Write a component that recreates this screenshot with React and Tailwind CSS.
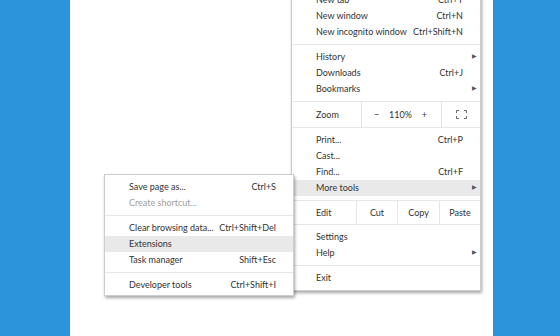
import React from "react";

const font = { fontFamily: "Lato, 'Liberation Sans', sans-serif" };

const Item = ({ label, shortcut, arrow, muted, active }) => (
	<div className={`h-4 flex items-center pl-6 pr-[17px] whitespace-nowrap ${active ? "bg-[#e9e9e9]" : ""}`}>
		<span className={`flex-1 ${muted ? "text-[#a0a0a0]" : "text-[#333]"}`}>{label}</span>
		{shortcut && <span className="text-[#333]">{shortcut}</span>}
		{arrow && <span className="text-[6px] leading-none text-[#555] -mr-[14px] -mt-[2px]">&#9654;</span>}
	</div>
);

const Sep = () => <div className="my-1 border-t border-[#e6e6e6]" />;

const MainMenu = () => (
	<div className="absolute left-[221px] top-[-13px] w-[190px] bg-white border border-[#cdcdcd] shadow-[1px_2px_3px_rgba(0,0,0,0.35)] py-1">
		<Item label="New tab" shortcut="Ctrl+T" />
		<Item label="New window" shortcut="Ctrl+N" />
		<Item label="New incognito window" shortcut="Ctrl+Shift+N" />
		<Sep />
		<Item label="History" arrow />
		<Item label="Downloads" shortcut="Ctrl+J" />
		<Item label="Bookmarks" arrow />
		<div className="mt-1 h-[27px] flex border-y border-[#e6e6e6] text-[#333]">
			<div className="w-[70px] pl-6 flex items-center border-r border-[#e6e6e6]">Zoom</div>
			<div className="w-[80px] flex items-center justify-between pl-3 pr-3.5 border-r border-[#e6e6e6]">
				<span>&minus;</span>
				<span>110%</span>
				<span>+</span>
			</div>
			<div className="flex-1 flex items-center justify-center">
				<svg width="11" height="9" viewBox="0 0 11 9" fill="none" stroke="#666" strokeWidth="1">
					<path d="M0.5 3V0.5H3M8 0.5H10.5V3M10.5 6V8.5H8M3 8.5H0.5V6" />
				</svg>
			</div>
		</div>
		<div className="mt-1">
			<Item label="Print..." shortcut="Ctrl+P" />
			<Item label="Cast..." />
			<Item label="Find..." shortcut="Ctrl+F" />
			<Item label="More tools" arrow active />
		</div>
		<div className="mt-1 h-[25px] flex border-y border-[#e6e6e6] text-[#333]">
			<div className="w-[65px] pl-6 flex items-center border-r border-[#e6e6e6]">Edit</div>
			<div className="w-[41px] flex items-center justify-center border-r border-[#e6e6e6]">Cut</div>
			<div className="w-[42px] flex items-center justify-center border-r border-[#e6e6e6]">Copy</div>
			<div className="flex-1 flex items-center justify-center">Paste</div>
		</div>
		<div className="mt-1">
			<Item label="Settings" />
			<Item label="Help" arrow />
		</div>
		<Sep />
		<Item label="Exit" />
	</div>
);

const SubMenu = () => (
	<div className="absolute left-[34px] top-[174px] w-[190px] bg-white border border-[#cdcdcd] shadow-[1px_2px_3px_rgba(0,0,0,0.35)] pt-1 pb-0.5">
		<Item label="Save page as..." shortcut="Ctrl+S" />
		<Item label="Create shortcut..." muted />
		<Sep />
		<Item label="Clear browsing data..." shortcut="Ctrl+Shift+Del" />
		<Item label="Extensions" active />
		<Item label="Task manager" shortcut="Shift+Esc" />
		<Sep />
		<Item label="Developer tools" shortcut="Ctrl+Shift+I" />
	</div>
);

export default function App() {
	return (
		<div className="h-[336px] w-[560px] flex overflow-hidden text-[9px]" style={font}>
			<div className="w-[70px] bg-[#2b95dc]" />
			<div className="relative flex-1 bg-white">
				<MainMenu />
				<SubMenu />
			</div>
			<div className="w-[67px] bg-[#2b95dc]" />
		</div>
	);
}
